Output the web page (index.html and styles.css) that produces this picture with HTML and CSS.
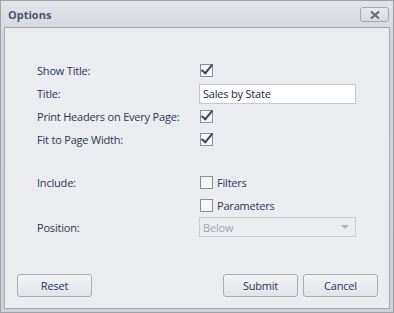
FILE: index.html
```html
<!DOCTYPE html>
<html>
<head>
<meta charset="utf-8">
<link rel="stylesheet" href="styles.css">
</head>
<body>
<div class="dialog">
  <div class="titlebar">
    <span class="title">Options</span>
    <button class="close" aria-label="Close">
      <svg width="12" height="10" viewBox="0 0 12 10"><path d="M2 1.5 L10 8.5 M10 1.5 L2 8.5" stroke="#6a6d78" stroke-width="2.2" fill="none"/></svg>
    </button>
  </div>
  <div class="panel">
    <div class="form">
      <div class="label">Show Title:</div>
      <div class="value"><span class="check on"></span></div>

      <div class="label">Title:</div>
      <div class="value"><div class="textbox">Sales by State</div></div>

      <div class="label">Print Headers on Every Page:</div>
      <div class="value"><span class="check on"></span></div>

      <div class="label">Fit to Page Width:</div>
      <div class="value"><span class="check on"></span></div>

      <div class="spacer"></div>

      <div class="label">Include:</div>
      <div class="value"><span class="check"></span><span class="cbtext">Filters</span></div>

      <div class="label"></div>
      <div class="value"><span class="check"></span><span class="cbtext">Parameters</span></div>

      <div class="label">Position:</div>
      <div class="value"><div class="combo"><span>Below</span><span class="arrow"></span></div></div>
    </div>
    <div class="fill"></div>
    <div class="buttons">
      <button class="btn">Reset</button>
      <div class="right">
        <button class="btn">Submit</button>
        <button class="btn">Cancel</button>
      </div>
    </div>
  </div>
</div>
</body>
</html>
```

FILE: styles.css
```css
html, body {
  margin: 0;
  padding: 0;
}
body {
  width: 394px;
  height: 313px;
  font-family: "Open Sans", "DejaVu Sans", sans-serif;
  font-size: 11px;
  letter-spacing: -0.2px;
  color: #2c3558;
}
.dialog {
  box-sizing: border-box;
  width: 394px;
  height: 313px;
  border: 1px solid #9ea1aa;
  background: linear-gradient(#e3e4e8, #d3d4d9 40px, #d0d1d6);
  display: flex;
  flex-direction: column;
  padding: 0 3px 3px 3px;
}
.titlebar {
  height: 26px;
  display: flex;
  align-items: center;
  justify-content: space-between;
  padding-left: 4px;
}
.title {
  font-weight: bold;
  font-size: 11px;
  letter-spacing: 0;
  color: #4e5370;
}
.close {
  width: 29px;
  height: 15px;
  margin-right: 1px;
  margin-top: 1px;
  border: 1px solid #a3a6ae;
  border-radius: 3px;
  background: linear-gradient(#e8e9ec, #d8d9dd);
  padding: 0;
  display: flex;
  align-items: center;
  justify-content: center;
}
.panel {
  flex: 1;
  border: 1px solid #a7a9b0;
  background: #ebecef;
  display: flex;
  flex-direction: column;
  padding: 31px 11px 11px 12px;
}
.form {
  display: grid;
  grid-template-columns: 162px 157px;
  grid-template-rows: 23px 23px 23px 23px 20px 23px 22px 22px;
  padding-left: 20px;
}
.spacer {
  grid-column: 1 / span 2;
}
.label {
  display: flex;
  align-items: center;
}
.value {
  display: flex;
  align-items: center;
}
.check {
  box-sizing: border-box;
  width: 13px;
  height: 13px;
  border: 1px solid #8b8e97;
  background: #f5f5f7;
  margin-left: 1px;
  position: relative;
}
.check.on::after {
  content: "";
  position: absolute;
  left: 3px;
  top: -3px;
  width: 4px;
  height: 10px;
  border-right: 2px solid #3f4350;
  border-bottom: 2px solid #3f4350;
  transform: rotate(40deg);
}
.cbtext {
  margin-left: 4px;
}
.textbox {
  box-sizing: border-box;
  width: 157px;
  height: 20px;
  border: 1px solid #c5c7cd;
  background: #fff;
  padding-left: 3px;
  display: flex;
  align-items: center;
  color: #1f2440;
}
.combo {
  box-sizing: border-box;
  width: 157px;
  height: 20px;
  border: 1px solid #c9cbd1;
  background: #ebecef;
  padding: 0 6px 0 3px;
  display: flex;
  align-items: center;
  justify-content: space-between;
  color: #a3a5ab;
}
.arrow {
  width: 0;
  height: 0;
  border-left: 4px solid transparent;
  border-right: 4px solid transparent;
  border-top: 4px solid #b3b5bb;
}
.fill {
  flex: 1;
}
.buttons {
  display: flex;
  justify-content: space-between;
}
.right {
  display: flex;
  gap: 5px;
}
.btn {
  box-sizing: border-box;
  width: 75px;
  height: 23px;
  border: 1px solid #a9abb2;
  border-radius: 3px;
  background: linear-gradient(#f3f4f6, #e2e3e7);
  font-family: "Open Sans", "DejaVu Sans", sans-serif;
  font-size: 11px;
  letter-spacing: -0.2px;
  color: #2a3366;
  padding: 0;
}
```
